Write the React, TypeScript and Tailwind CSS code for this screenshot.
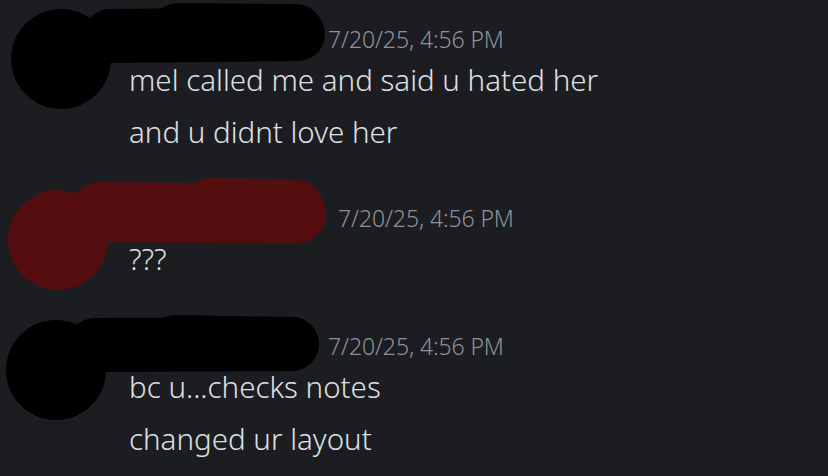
const font = { fontFamily: '"Noto Sans", "Open Sans", sans-serif' };

type Blob = { circle: [number, number, number]; bars: [number, number, number, number, number][] };

const Redaction = ({ blob, color, viewY }: { blob: Blob; color: string; viewY: number }) => (
  <svg
    className="absolute left-0 top-[-30px]"
    width={340}
    height={140}
    viewBox={`0 ${viewY} 340 140`}
    aria-hidden
  >
    <circle cx={blob.circle[0]} cy={blob.circle[1]} r={blob.circle[2]} fill={color} />
    {blob.bars.map(([x1, y1, x2, y2, w], i) => (
      <line key={i} x1={x1} y1={y1} x2={x2} y2={y2} stroke={color} strokeWidth={w} strokeLinecap="round" />
    ))}
  </svg>
);

const Group = ({
  nameWidth,
  lines,
  blob,
  color,
  viewY,
  className,
}: {
  nameWidth: string;
  lines: string[];
  blob: Blob;
  color: string;
  viewY: number;
  className: string;
}) => (
  <div className={`relative pl-[129px] ${className}`}>
    <Redaction blob={blob} color={color} viewY={viewY} />
    <div className="flex h-[30px] items-center">
      <div className={nameWidth} />
      <span className="text-[23px] font-light leading-[30px] text-[#90929a] tracking-[-0.1px]">7/20/25, 4:56 PM</span>
    </div>
    {lines.map((l) => (
      <div key={l} className="text-[29.5px] font-light leading-[52px] text-[#dfe0e4]">
        {l}
      </div>
    ))}
  </div>
);

export default function App() {
  return (
    <div className="relative w-[828px] h-[476px] overflow-hidden bg-[#1c1d21]" style={font}>
      <div className="flex flex-col pt-[24px]">
        <Group
          className=""
          nameWidth="w-[199px]"
          lines={['mel called me and said u hated her', 'and u didnt love her']}
          color="#000000"
          viewY={-6}
          blob={{ circle: [61, 59, 50], bars: [[110, 36, 298, 34, 54], [178, 30, 296, 31, 54]] }}
        />
        <Group
          className="mt-[45px]"
          nameWidth="w-[209px]"
          lines={['???']}
          color="#540e10"
          viewY={173}
          blob={{ circle: [58, 240, 50], bars: [[100, 212, 296, 214, 60], [210, 206, 296, 208, 56]] }}
        />
        <Group
          className="mt-[46px]"
          nameWidth="w-[199px]"
          lines={['bc u...checks notes', 'changed ur layout']}
          color="#000000"
          viewY={301}
          blob={{ circle: [56, 370, 50], bars: [[95, 345, 292, 344, 54], [175, 340, 292, 342, 50]] }}
        />
      </div>
    </div>
  );
}
